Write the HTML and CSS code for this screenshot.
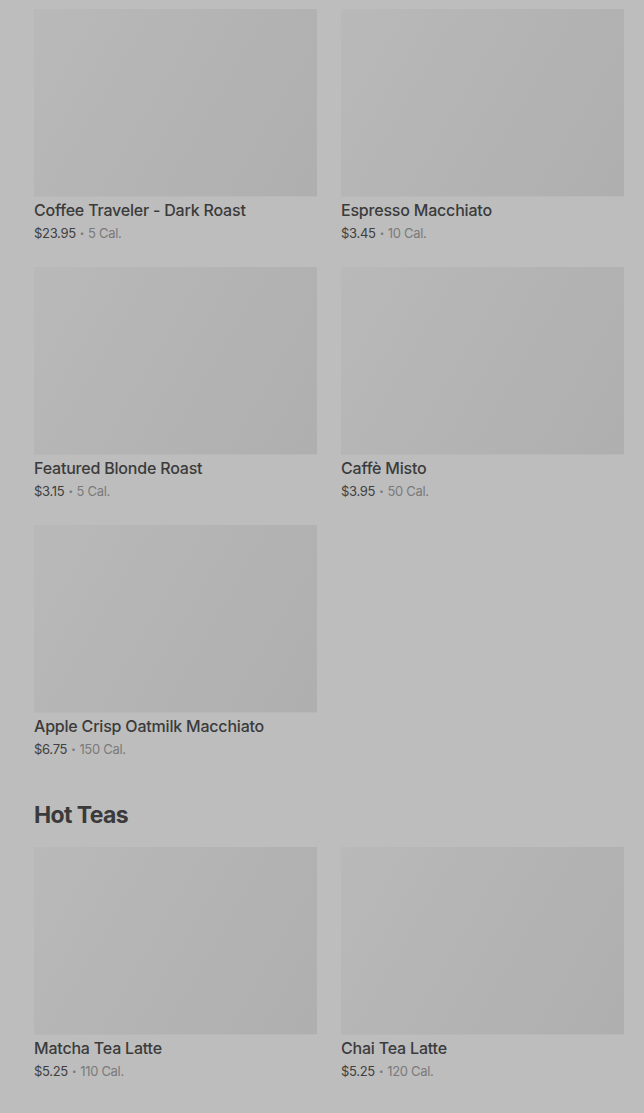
FILE: index.html
```html
<!DOCTYPE html>
<html lang="en">
<head>
<meta charset="utf-8">
<title>Menu</title>
<link rel="stylesheet" href="styles.css">
</head>
<body>
<main class="page">
  <section class="grid">
    <article class="item">
      <div class="thumb"></div>
      <h3 class="name">Coffee Traveler - Dark Roast</h3>
      <p class="meta"><span class="price">$23.95</span><span class="dot">•</span><span class="cal">5 Cal.</span></p>
    </article>
    <article class="item">
      <div class="thumb"></div>
      <h3 class="name">Espresso Macchiato</h3>
      <p class="meta"><span class="price">$3.45</span><span class="dot">•</span><span class="cal">10 Cal.</span></p>
    </article>
    <article class="item">
      <div class="thumb"></div>
      <h3 class="name">Featured Blonde Roast</h3>
      <p class="meta"><span class="price">$3.15</span><span class="dot">•</span><span class="cal">5 Cal.</span></p>
    </article>
    <article class="item">
      <div class="thumb"></div>
      <h3 class="name">Caffè Misto</h3>
      <p class="meta"><span class="price">$3.95</span><span class="dot">•</span><span class="cal">50 Cal.</span></p>
    </article>
    <article class="item">
      <div class="thumb"></div>
      <h3 class="name">Apple Crisp Oatmilk Macchiato</h3>
      <p class="meta"><span class="price">$6.75</span><span class="dot">•</span><span class="cal">150 Cal.</span></p>
    </article>
  </section>

  <h2 class="section-title">Hot Teas</h2>
  <section class="grid">
    <article class="item">
      <div class="thumb"></div>
      <h3 class="name">Matcha Tea Latte</h3>
      <p class="meta"><span class="price">$5.25</span><span class="dot">•</span><span class="cal">110 Cal.</span></p>
    </article>
    <article class="item">
      <div class="thumb"></div>
      <h3 class="name">Chai Tea Latte</h3>
      <p class="meta"><span class="price">$5.25</span><span class="dot">•</span><span class="cal">120 Cal.</span></p>
    </article>
  </section>
</main>
</body>
</html>
```

FILE: styles.css
```css
html, body {
  margin: 0;
  padding: 0;
  background: #bdbdbd;
}

body {
  font-family: "Inter", "Roboto", "Liberation Sans", sans-serif;
  color: #3a3a3a;
}

.page {
  padding: 9px 20px 0 34px;
}

.grid {
  display: grid;
  grid-template-columns: 283px 283px;
  column-gap: 24px;
  row-gap: 25px;
}

.item {
  display: flex;
  flex-direction: column;
}

.thumb {
  height: 188px;
  background: linear-gradient(120deg, #b9b9b9 0%, #b4b4b4 45%, #afafaf 100%);
  box-shadow: inset 0 -1px 0 #b8b8b8;
}

.name {
  margin: 3px 0 0;
  font-size: 16px;
  line-height: 20px;
  font-weight: 500;
  color: #3b3b3b;
  letter-spacing: -0.2px;
}

.meta {
  margin: 4px 0 0;
  font-size: 13px;
  line-height: 18px;
  letter-spacing: -0.3px;
  color: #7a7a7a;
  display: flex;
  align-items: center;
}

.price {
  color: #404040;
}

.dot {
  font-size: 8px;
  margin: 0 4px;
  color: #7a7a7a;
}

.cal {
  color: #7a7a7a;
}

.section-title {
  margin: 41px 0 16px;
  font-size: 23px;
  line-height: 32px;
  font-weight: 700;
  color: #3a3a3a;
  letter-spacing: -0.6px;
}
```
